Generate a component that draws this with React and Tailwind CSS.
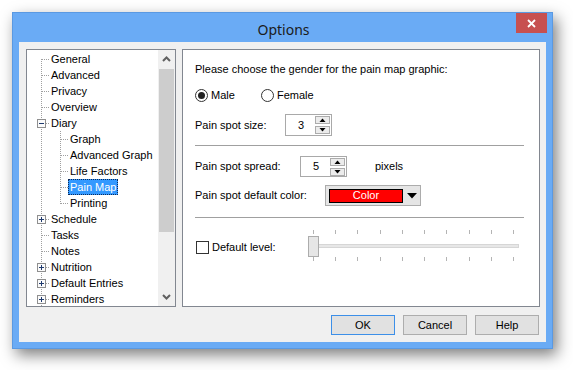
import React from "react";

const F = { fontFamily: '"Liberation Sans", Arial, sans-serif' };

const treeRows = [
  { t: "General", lvl: 0, first: true },
  { t: "Advanced", lvl: 0 },
  { t: "Privacy", lvl: 0 },
  { t: "Overview", lvl: 0 },
  { t: "Diary", lvl: 0, box: "minus" },
  { t: "Graph", lvl: 1 },
  { t: "Advanced Graph", lvl: 1 },
  { t: "Life Factors", lvl: 1 },
  { t: "Pain Map", lvl: 1, selected: true },
  { t: "Printing", lvl: 1, lastChild: true },
  { t: "Schedule", lvl: 0, box: "plus" },
  { t: "Tasks", lvl: 0 },
  { t: "Notes", lvl: 0 },
  { t: "Nutrition", lvl: 0, box: "plus" },
  { t: "Default Entries", lvl: 0, box: "plus" },
  { t: "Reminders", lvl: 0, box: "plus" },
];

function Connector({ row }) {
  const w = row.lvl === 0 ? 22 : 41;
  const dot = { stroke: "#a0a0a0", strokeWidth: 1, strokeDasharray: "1 1" };
  return (
    <svg width={w} height={16} className="shrink-0">
      {/* level 0 vertical */}
      <line x1={14.5} x2={14.5} y1={row.first ? 8 : 0} y2={16} {...dot} />
      {row.lvl === 0 && <line x1={15} x2={22} y1={8.5} y2={8.5} {...dot} />}
      {row.lvl === 1 && (
        <>
          <line x1={33.5} x2={33.5} y1={0} y2={row.lastChild ? 9 : 16} {...dot} />
          <line x1={34} x2={41} y1={8.5} y2={8.5} {...dot} />
        </>
      )}
      {row.box && (
        <>
          <rect x={10.5} y={4.5} width={8} height={8} fill="#fbfbfb" stroke="#8f8f8f" strokeWidth={1} />
          <line x1={12} x2={17} y1={8.5} y2={8.5} stroke="#1f3a6e" strokeWidth={1} />
          {row.box === "plus" && (
            <line x1={14.5} x2={14.5} y1={6} y2={11} stroke="#1f3a6e" strokeWidth={1} />
          )}
        </>
      )}
    </svg>
  );
}

function Tree() {
  return (
    <div className="w-[150px] h-[258px] bg-white border border-[#828790] flex overflow-hidden">
      <div className="flex-1 flex flex-col pt-[1px] overflow-hidden">
        {treeRows.map((r) => (
          <div key={r.t} className="h-[16px] flex items-center shrink-0">
            <Connector row={r} />
            <span
              className={
                "px-[2px] h-[16px] leading-[16px] text-[11px] whitespace-nowrap " +
                (r.selected
                  ? "bg-[#3399ff] text-white outline outline-1 outline-dotted outline-[#0a2a5a] -outline-offset-1"
                  : "text-black")
              }
            >
              {r.t}
            </span>
          </div>
        ))}
      </div>
      <div className="w-[17px] bg-[#f0f0f0] flex flex-col">
        <div className="h-[18px] flex items-center justify-center">
          <svg width="9" height="6">
            <polyline points="1,5 4.5,1.5 8,5" fill="none" stroke="#606060" strokeWidth="2" />
          </svg>
        </div>
        <div className="mt-[1px] mx-[1px] h-[163px] bg-[#cdcdcd]" />
        <div className="flex-1" />
        <div className="h-[18px] flex items-center justify-center">
          <svg width="9" height="6">
            <polyline points="1,1 4.5,4.5 8,1" fill="none" stroke="#606060" strokeWidth="2" />
          </svg>
        </div>
      </div>
    </div>
  );
}

function Tri({ up }) {
  return (
    <svg width="7" height="4">
      <polygon points={up ? "0.5,4 3.5,0.5 6.5,4" : "0.5,0 3.5,3.5 6.5,0"} fill="#000" />
    </svg>
  );
}

function Spin({ value, h }) {
  return (
    <div className={"w-[47px] bg-white border border-[#a9a9a9] flex " + h}>
      <div className="flex-1 flex items-center justify-center text-[11px] text-black pl-[1px]">{value}</div>
      <div className="flex flex-col justify-center gap-[2px] pr-[1px]">
        <div className="w-[15px] h-[8px] border border-[#acacac] bg-[#ececec] flex items-center justify-center">
          <Tri up />
        </div>
        <div className="w-[15px] h-[8px] border border-[#acacac] bg-[#ececec] flex items-center justify-center">
          <Tri />
        </div>
      </div>
    </div>
  );
}

const ticks = [5, 27, 49, 72, 94, 116, 138, 161, 183, 205];

function Slider() {
  return (
    <div className="relative w-[212px] h-[31px]">
      <svg width="212" height="31" className="block">
        {ticks.map((x) => (
          <g key={x}>
            <line x1={x + 0.5} x2={x + 0.5} y1={0} y2={4} stroke="#b4b4b4" />
            <line x1={x + 0.5} x2={x + 0.5} y1={27} y2={31} stroke="#b4b4b4" />
          </g>
        ))}
        <rect x={0.5} y={14.5} width={210} height={3} fill="#e7e7e7" stroke="#d6d6d6" />
      </svg>
      <div className="absolute left-0 top-[6px] w-[11px] h-[21px] bg-[#e6e6e6] border border-[#acacac]" />
    </div>
  );
}

function Radio({ checked }) {
  return (
    <div className="w-[13px] h-[13px] rounded-full border border-[#333] bg-white flex items-center justify-center">
      {checked && <div className="w-[7px] h-[7px] rounded-full bg-[#222]" />}
    </div>
  );
}

function RightPanel() {
  return (
    <div className="w-[358px] h-[258px] bg-white border border-[#828790] pl-[12px] pt-[11px] flex flex-col text-[11px] text-black">
      <div className="h-[16px] leading-[16px]">Please choose the gender for the pain map graphic:</div>
      <div className="mt-[10px] h-[16px] flex items-center">
        <div className="w-[66px] flex items-center gap-[3px]">
          <Radio checked />
          <span>Male</span>
        </div>
        <div className="flex items-center gap-[3px]">
          <Radio />
          <span>Female</span>
        </div>
      </div>
      <div className="mt-[11px] flex items-center">
        <div className="w-[90px]">Pain spot size:</div>
        <Spin value="3" h="h-[22px]" />
      </div>
      <div className="mt-[9px] w-[329px] h-px bg-[#a0a0a0]" />
      <div className="mt-[10px] flex items-center">
        <div className="w-[105px]">Pain spot spread:</div>
        <Spin value="5" h="h-[21px]" />
        <div className="ml-[28px]">pixels</div>
      </div>
      <div className="mt-[8px] flex items-center">
        <div className="w-[130px]">Pain spot default color:</div>
        <div className="w-[96px] h-[21px] bg-[#e5e5e5] border border-[#acacac] flex items-center pl-[3px]">
          <div className="w-[74px] h-[14px] bg-[#ff0000] border border-black flex items-center justify-center text-white leading-none">
            Color
          </div>
          <div className="flex-1 flex justify-center pt-[1px]">
            <svg width="10" height="6">
              <polygon points="0,0 10,0 5,5.5" fill="#000" />
            </svg>
          </div>
        </div>
      </div>
      <div className="mt-[11px] w-[329px] h-px bg-[#a0a0a0]" />
      <div className="mt-[12px] flex">
        <div className="w-[113px] h-[31px] flex items-center pt-[3px] gap-[3px]">
          <div className="w-[13px] h-[13px] border border-[#333] bg-white ml-[1px]" />
          <span>Default level:</span>
        </div>
        <Slider />
      </div>
    </div>
  );
}

function Btn({ children, def }) {
  return (
    <div
      className={
        "w-[64px] h-[20px] bg-[#e1e1e1] border flex items-center justify-center text-[11px] text-black " +
        (def ? "border-[#3c8fe8]" : "border-[#adadad]")
      }
    >
      {children}
    </div>
  );
}

export default function App() {
  return (
    <div className="w-[573px] h-[370px] bg-white overflow-hidden pt-[12px] pl-[12px]" style={F}>
      <div className="w-[541px] h-[337px] bg-[#6aabf5] border border-[#5a99e2] shadow-[4px_6px_14px_rgba(0,0,0,0.5)] flex flex-col">
        <div className="relative h-[29px] flex items-center justify-center">
          <span
            className="text-[14px] text-[#1b1b1b] pt-[3px] pl-[2px]"
            style={{ fontFamily: '"Noto Sans", "Open Sans", sans-serif' }}
          >
            Options
          </span>
          <div className="absolute right-[5px] top-0 w-[31px] h-[20px] bg-[#c75050] flex items-center justify-center">
            <svg width="9" height="9">
              <line x1="1" y1="1" x2="8" y2="8" stroke="#fff" strokeWidth="1.8" />
              <line x1="8" y1="1" x2="1" y2="8" stroke="#fff" strokeWidth="1.8" />
            </svg>
          </div>
        </div>
        <div className="mx-[6px] h-[300px] bg-[#f0f0f0] flex flex-col">
          <div className="pt-[7px] pl-[7px] flex gap-[6px]">
            <Tree />
            <RightPanel />
          </div>
          <div className="mt-[8px] pr-[7px] flex justify-end gap-[8px]">
            <Btn def>OK</Btn>
            <Btn>Cancel</Btn>
            <Btn>Help</Btn>
          </div>
        </div>
      </div>
    </div>
  );
}
